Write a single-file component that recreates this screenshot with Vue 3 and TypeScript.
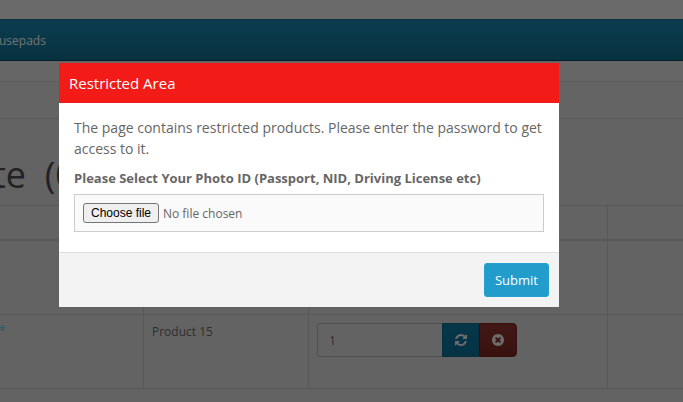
<script setup lang="ts">
const columns = [144, 165, 299]
</script>

<template>
  <div class="page">
    <div class="top"></div>
    <nav class="nav"><span class="nav-item">Mousepads</span></nav>
    <div class="crumb-gap"></div>
    <div class="crumb"></div>
    <div class="lower">
      <h1 class="title">te&nbsp;&nbsp;(0</h1>
      <div class="table">
        <div class="row head">
          <div v-for="c in columns" :key="c" class="cell" :style="{ width: c + 'px' }"></div>
          <div class="cell last"></div>
        </div>
        <div class="row body-row">
          <div v-for="c in columns" :key="c" class="cell" :style="{ width: c + 'px' }"></div>
          <div class="cell last"></div>
        </div>
        <div class="row body-row">
          <div class="cell first"><span class="star">*</span></div>
          <div class="cell name">Product 15</div>
          <div class="cell qty">
            <div class="group">
              <span class="input">1</span>
              <button class="btn refresh" aria-label="Update">
                <svg viewBox="0 0 1792 1792" width="14" height="14"><path fill="currentColor" d="M1639 1056q0 5-1 7-64 268-268 434.5t-478 166.5q-146 0-282.5-55t-243.5-157l-129 129q-19 19-45 19t-45-19-19-45v-448q0-26 19-45t45-19h448q26 0 45 19t19 45-19 45l-137 137q71 66 161 102t187 36q134 0 250-65t186-179q11-17 53-117 8-23 30-23h192q13 0 22.5 9.5t9.5 22.5zm25-800v448q0 26-19 45t-45 19h-448q-26 0-45-19t-19-45 19-45l138-138q-148-137-349-137-134 0-250 65t-186 179q-11 17-53 117-8 23-30 23h-199q-13 0-22.5-9.5t-9.5-22.5v-7q65-268 270-434.5t480-166.5q146 0 284 55.5t245 156.5l130-129q19-19 45-19t45 19 19 45z"/></svg>
              </button>
              <button class="btn remove" aria-label="Remove">
                <svg viewBox="0 0 1792 1792" width="14" height="14"><path fill="currentColor" d="M1277 1122q0-26-19-45l-181-181 181-181q19-19 19-45 0-27-19-46l-90-90q-19-19-46-19-26 0-45 19l-181 181-181-181q-19-19-45-19-27 0-46 19l-90 90q-19 19-19 46 0 26 19 45l181 181-181 181q-19 19-19 45 0 27 19 46l90 90q19 19 46 19 26 0 45-19l181-181 181 181q19 19 45 19 27 0 46-19l90-90q19-19 19-46zm387-226q0 209-103 385.5t-279.5 279.5-385.5 103-385.5-103-279.5-279.5-103-385.5 103-385.5 279.5-279.5 385.5-103 385.5 103 279.5 279.5 103 385.5z"/></svg>
              </button>
            </div>
          </div>
          <div class="cell last"></div>
        </div>
      </div>
    </div>

    <div class="backdrop"></div>
    <section class="modal">
      <header class="modal-head">Restricted Area</header>
      <div class="modal-body">
        <p class="lead">The page contains restricted products. Please enter the password to get access to it.</p>
        <label class="label" for="photo">Please Select Your Photo ID (Passport, NID, Driving License etc)</label>
        <div class="file-box">
          <input id="photo" type="file" class="file" />
          <label class="choose" for="photo">Choose file</label>
          <span class="chosen">No file chosen</span>
        </div>
      </div>
      <footer class="modal-foot"><button class="submit">Submit</button></footer>
    </section>
  </div>
</template>

<style>
html, body { margin: 0; background: #fff; overflow: hidden; }
</style>

<style scoped>
.page {
  position: relative;
  width: 683px;
  height: 402px;
  overflow: hidden;
  background: #cdcdcd;
  color: #666;
  font-family: "Open Sans", sans-serif;
  font-size: 12px;
}
.top { height: 19px; background: #d4d4d4; }
.nav {
  box-sizing: border-box;
  height: 42px;
  display: flex;
  align-items: center;
  background: linear-gradient(#167a9f, #0e6480);
  border-top: 1px solid #0e5f7e;
  border-bottom: 1px solid #063a4e;
  overflow: hidden;
}
.nav-item { margin-left: -19px; color: #e4e4e4; font-size: 12px; }
.crumb-gap { box-sizing: border-box; height: 21px; border-bottom: 1px solid #b4b4b4; }
.crumb { box-sizing: border-box; height: 37px; border-bottom: 1px solid #b4b4b4; background: #c8c8c8; }
.lower { background: #c6c6c6; height: 283px; }
.title {
  box-sizing: border-box;
  height: 86px;
  margin: 0 0 0 -7px;
  padding-top: 34px;
  white-space: nowrap;
  font-size: 36px;
  font-weight: 400;
  line-height: 44px;
  color: #444;
}
.table { border-top: 1px solid #b0b0b0; }
.row { box-sizing: border-box; display: flex; border-bottom: 1px solid #b0b0b0; }
.head { height: 35px; border-bottom-width: 2px; }
.body-row { height: 74px; }
.cell { box-sizing: border-box; border-right: 1px solid #b0b0b0; flex: none; }
.cell.last { border-right: 0; flex: 1; }
.first { width: 144px; position: relative; }
.star { position: absolute; left: -1px; top: 7px; color: #4fb0d8; }
.name { width: 165px; padding: 8px; font-size: 12px; line-height: 17px; color: #5e5e5e; }
.qty { width: 299px; padding: 8px; }
.group { display: flex; width: 200px; height: 34px; }
.input {
  box-sizing: border-box;
  width: 125px;
  border: 1px solid #a0a0a0;
  border-right: 0;
  border-radius: 4px 0 0 4px;
  padding: 8px 11px;
  line-height: 17px;
  color: #5e5e5e;
}
.btn {
  width: 37px;
  padding: 0;
  border: 1px solid transparent;
  display: flex;
  align-items: center;
  justify-content: center;
  color: #d8d8d8;
}
.refresh { background: linear-gradient(#0e6e94, #0c6488); border-color: #0c5f80; }
.remove { width: 38px; background: linear-gradient(#84302c, #70241e); border-color: #682019; border-radius: 0 4px 4px 0; }
.backdrop {
  position: absolute;
  inset: 0;
  background: rgba(0, 0, 0, 0.5);
}
.modal {
  position: absolute;
  left: 59px;
  top: 63px;
  width: 500px;
  height: 244px;
  background: #fff;
  display: flex;
  flex-direction: column;
}
.modal-head {
  box-sizing: border-box;
  height: 40px;
  padding: 0 10px;
  display: flex;
  align-items: center;
  background: #f21b17;
  color: #fff;
  font-size: 15px;
}
.modal-body { flex: 1; padding: 14px 15px; min-height: 0; }
.lead { margin: 0; font-size: 14px; line-height: 21px; color: #666; }
.label {
  display: block;
  margin-top: 10px;
  font-size: 13px;
  font-weight: 700;
  line-height: 18px;
  color: #666;
}
.file-box {
  box-sizing: border-box;
  height: 38px;
  margin-top: 7px;
  padding: 8px;
  display: flex;
  align-items: center;
  gap: 4px;
  background: #fafafa;
  border: 1px solid #ccc;
}
.file { display: none; }
.choose {
  box-sizing: border-box;
  width: 76px;
  height: 20px;
  display: flex;
  align-items: center;
  justify-content: center;
  border: 1px solid #767676;
  border-radius: 3px;
  background: #efefef;
  color: #000;
  font-family: "Liberation Sans", sans-serif;
  font-size: 12px;
}
.chosen { font-size: 12px; color: #666; }
.modal-foot {
  box-sizing: border-box;
  height: 55px;
  padding: 10px;
  display: flex;
  justify-content: flex-end;
  align-items: center;
  background: #f3f3f3;
  border-top: 1px solid #ddd;
}
.submit {
  width: 65px;
  height: 34px;
  padding: 0;
  border: 1px solid #23a1d1;
  border-radius: 3px;
  background: #219ccb;
  color: #fff;
  font-family: "Open Sans", sans-serif;
  font-size: 13px;
}
</style>
